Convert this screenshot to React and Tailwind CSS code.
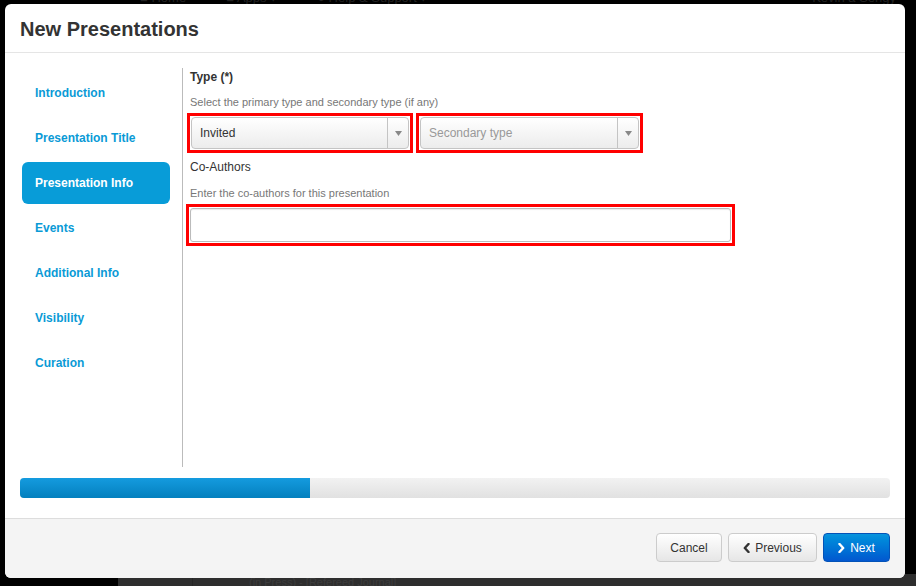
import { useState } from 'react';

const steps = [
  'Introduction',
  'Presentation Title',
  'Presentation Info',
  'Events',
  'Additional Info',
  'Visibility',
  'Curation',
];

function Caret() {
  return (
    <svg width="7" height="5" viewBox="0 0 7 5">
      <path d="M0 0 H7 L3.5 5 Z" fill="#888" />
    </svg>
  );
}

function Chevron({ dir }) {
  return (
    <svg width="7" height="10" viewBox="0 0 7 10" className="mr-[5px]">
      <path
        d={dir === 'left' ? 'M5.5 1 L1.8 5 L5.5 9' : 'M1.5 1 L5.2 5 L1.5 9'}
        fill="none"
        stroke="currentColor"
        strokeWidth="2.4"
        strokeLinecap="round"
        strokeLinejoin="round"
      />
    </svg>
  );
}

function Select({ value, placeholder }) {
  return (
    <div className="flex h-[32px] items-stretch rounded-[4px] border border-[#c4c4c4] bg-gradient-to-b from-white to-[#ececec] shadow-[inset_0_1px_0_rgba(255,255,255,0.8)]">
      <div className={`flex flex-1 items-center pl-[8px] text-[12px] ${value ? 'text-[#333]' : 'text-[#999]'}`}>
        {value || placeholder}
      </div>
      <div className="flex w-[21px] items-center justify-center border-l border-[#c4c4c4]">
        <Caret />
      </div>
    </div>
  );
}

export default function App() {
  const [current] = useState(2);

  return (
    <div
      className="relative h-[586px] w-[916px] overflow-hidden bg-black"
      style={{ fontFamily: '"Liberation Sans", Arial, sans-serif' }}
    >
      {/* dimmed page behind the modal */}
      <div className="absolute left-0 top-[-9px] flex h-[13px] w-full items-center gap-[40px] pl-[140px] text-[13px] text-[#222]">
        <span>■ Home</span>
        <span>■ Apps ▾</span>
        <span>● Help &amp; Support ▾</span>
        <span className="ml-auto mr-[20px]">Kevin a Sengy</span>
      </div>
      <div className="absolute bottom-0 left-[118px] right-0 flex h-[12px] bg-[#2e2e2e]">
        <div className="w-[75px] border-r border-[#262626]" />
        <div className="pl-[56px] pt-[3px] text-[11px] leading-none text-[#3c3c3c]">(in Press) - [Refereed Journal]</div>
      </div>

      {/* modal */}
      <div className="absolute left-[5px] top-[4px] flex h-[574px] w-[900px] flex-col overflow-hidden rounded-[6px] bg-white">
        <div className="flex h-[49px] items-center border-b border-[#e5e5e5] px-[15px] pt-[2px]">
          <h3 className="text-[20px] font-bold text-[#333]">New Presentations</h3>
        </div>

        <div className="flex flex-1 flex-col px-[15px] pt-[15px]">
          <div className="flex h-[399px]">
            <div className="w-[163px] border-r border-[#bbb] pl-[2px] pr-[12px] pt-[4px]">
              {steps.map((s, i) => (
                <div
                  key={s}
                  className={`mb-[3px] flex h-[42px] items-center rounded-[6px] pl-[13px] text-[12px] font-bold ${
                    i === current ? 'bg-[#089cd8] text-white' : 'text-[#0a9ad6]'
                  }`}
                >
                  {s}
                </div>
              ))}
            </div>

            <div className="flex-1 pl-[4px]">
              <div className="pl-[3px] text-[12px] font-bold leading-[18px] text-[#333]">Type (*)</div>
              <div className="mt-[9px] pl-[3px] text-[11px] leading-[14px] text-[#777]">
                Select the primary type and secondary type (if any)
              </div>
              <div className="mt-[4px] flex gap-[3px]">
                <div className="w-[226px] border-[3px] border-[#f00] p-px">
                  <Select value="Invited" />
                </div>
                <div className="w-[227px] border-[3px] border-[#f00] p-px">
                  <Select placeholder="Secondary type" />
                </div>
              </div>
              <div className="mt-[5px] pl-[3px] text-[12px] leading-[18px] text-[#333]">Co-Authors</div>
              <div className="mt-[10px] pl-[3px] text-[11px] leading-[14px] text-[#777]">
                Enter the co-authors for this presentation
              </div>
              <div className="ml-[-1px] mt-[4px] w-[549px] border-[3px] border-[#f00] p-px">
                <input
                  type="text"
                  className="h-[34px] w-full rounded-[3px] border border-[#bbb] bg-white px-[6px] text-[12px] shadow-[inset_0_1px_1px_rgba(0,0,0,0.08)] outline-none"
                />
              </div>
            </div>
          </div>

          <div className="mt-[11px] flex h-[20px] overflow-hidden rounded-[4px] bg-gradient-to-b from-[#f2f2f2] to-[#e1e1e1]">
            <div
              className="h-full bg-gradient-to-b from-[#149bdf] to-[#0480be]"
              style={{ width: `${((current + 1) / 9) * 100}%` }}
            />
          </div>
        </div>

        <div className="flex h-[60px] items-center justify-end gap-[6px] border-t border-[#ddd] bg-[#f4f4f4] px-[15px] pb-[2px]">
          <button className="flex h-[29px] w-[66px] items-center justify-center rounded-[4px] border border-[#ccc] bg-gradient-to-b from-white to-[#e6e6e6] text-[12px] text-[#333]">
            Cancel
          </button>
          <button className="flex h-[29px] w-[89px] items-center justify-center rounded-[4px] border border-[#ccc] bg-gradient-to-b from-white to-[#e6e6e6] text-[12px] text-[#333]">
            <Chevron dir="left" />
            Previous
          </button>
          <button className="flex h-[29px] w-[67px] items-center justify-center rounded-[4px] border border-[#0453b8] bg-gradient-to-b from-[#0894dd] to-[#0457cf] text-[12px] text-white">
            <Chevron dir="right" />
            Next
          </button>
        </div>
      </div>
    </div>
  );
}
